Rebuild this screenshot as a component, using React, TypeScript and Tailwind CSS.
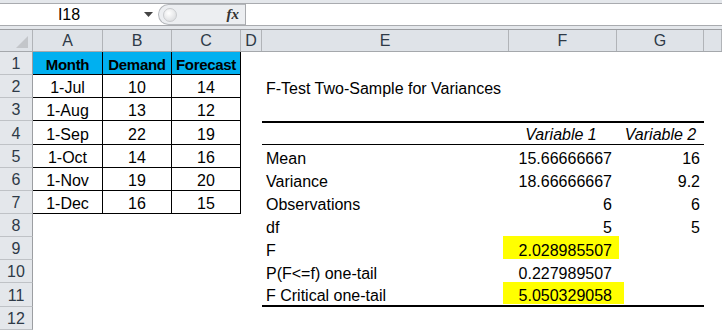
import React from 'react'

const colWidths = [
  'w-[33px]',
  'w-[70px]',
  'w-[69px]',
  'w-[69px]',
  'w-[21px]',
  'w-[247px]',
  'w-[108px]',
  'w-[87px]',
  'flex-1',
]

const colNames = ['', 'A', 'B', 'C', 'D', 'E', 'F', 'G', '']

const rowHeights = [
  'h-[23px]',
  'h-[23px]',
  'h-[23px]',
  'h-[24px]',
  'h-[23px]',
  'h-[23px]',
  'h-[23px]',
  'h-[23px]',
  'h-[23px]',
  'h-[23px]',
  'h-[24px]',
  'h-[23px]',
]

type Row = {
  a?: string
  b?: string
  c?: string
  e?: string
  f?: string
  g?: string
}

const rows: Row[] = [
  { a: 'Month', b: 'Demand', c: 'Forecast' },
  { a: '1-Jul', b: '10', c: '14', e: 'F-Test Two-Sample for Variances' },
  { a: '1-Aug', b: '13', c: '12' },
  { a: '1-Sep', b: '22', c: '19', f: 'Variable 1', g: 'Variable 2' },
  { a: '1-Oct', b: '14', c: '16', e: 'Mean', f: '15.66666667', g: '16' },
  { a: '1-Nov', b: '19', c: '20', e: 'Variance', f: '18.66666667', g: '9.2' },
  { a: '1-Dec', b: '16', c: '15', e: 'Observations', f: '6', g: '6' },
  { e: 'df', f: '5', g: '5' },
  { e: 'F', f: '2.028985507' },
  { e: 'P(F<=f) one-tail', f: '0.227989507' },
  { e: 'F Critical one-tail', f: '5.050329058' },
  {},
]

function FormulaBar() {
  return (
    <div className="flex h-[30px] flex-col">
      <div className="h-[4px] border-b border-[#a9abaf] bg-[#e4e7eb]" />
      <div className="flex h-[21px] bg-white">
        <div className="relative flex w-[158px] items-center justify-center pr-[20px]">
          <span className="text-[16px] leading-none text-black">I18</span>
          <svg
            className="absolute right-[5px] top-[8px]"
            width="9"
            height="5"
            viewBox="0 0 9 5"
          >
            <path d="M0 0 L9 0 L4.5 5 Z" fill="#444" />
          </svg>
        </div>
        <div className="flex w-[87px] items-center justify-between rounded-l-full border border-r-0 border-[#b4b7bb] bg-[#eceef1] pl-[4px] pr-[6px]">
          <span className="h-[14px] w-[14px] rounded-full border border-[#c9cbce] bg-[radial-gradient(circle_at_40%_35%,#ffffff,#d4d6d9)]" />
          <span className="font-['Liberation_Serif',serif] text-[15px] font-bold italic leading-none text-[#333]">
            fx
          </span>
        </div>
        <div className="flex-1 border-l border-[#a9abaf]" />
      </div>
      <div className="h-[5px] border-y border-b-[#9c9ea2] border-t-[#a9abaf] bg-[#e4e7eb]" />
    </div>
  )
}

function HeaderRow() {
  return (
    <div className="flex h-[22px] border-b border-[#a5a8ac] bg-[#dfe3e8]">
      {colNames.map((name, i) => (
        <div
          key={i}
          className={`${colWidths[i]} relative flex items-center justify-center border-r border-[#b1b4b8] text-[16px] leading-none text-[#2e3a47]`}
        >
          {i === 0 ? (
            <svg
              className="absolute bottom-[3px] right-[4px]"
              width="12"
              height="12"
              viewBox="0 0 12 12"
            >
              <path d="M12 0 L12 12 L0 12 Z" fill="#c3c6ca" />
            </svg>
          ) : (
            name
          )}
        </div>
      ))}
    </div>
  )
}

function Highlight({ text, wide }: { text: string; wide?: boolean }) {
  return (
    <>
      <span
        className={`absolute top-[-1px] bottom-[1px] left-[-6px] bg-[#ffff00] ${
          wide ? 'right-[-7px]' : 'right-[-2px]'
        }`}
      />
      <span className="relative">{text}</span>
    </>
  )
}

export default function App() {
  return (
    <div className="h-[331px] w-[722px] overflow-hidden bg-white font-['Liberation_Sans',Arial,sans-serif] text-black">
      <FormulaBar />
      <HeaderRow />

      {rows.map((row, r) => {
        const n = r + 1
        const inTable = n <= 7
        const isHead = n === 1
        const statTop = n === 4
        const statBottom = n === 11
        const tableCell = `flex items-end justify-center pb-[1px] border-r border-b border-black ${
          isHead ? 'bg-[#00b0f0] font-bold text-[15px] tracking-[-0.3px]' : ''
        }`
        const statBorder = statTop
          ? 'border-t-2 border-b border-black'
          : statBottom
            ? 'border-b-2 border-black'
            : ''

        return (
          <div
            key={n}
            className={`flex ${rowHeights[r]} text-[16px] leading-[16px]`}
          >
            <div className="flex w-[33px] items-end justify-center border-r border-b border-r-[#9c9ea2] border-b-[#bfc2c6] bg-[#e4e7eb] pb-[2px] text-[#2e3a47]">
              {n}
            </div>

            {inTable ? (
              <>
                <div className={`${colWidths[1]} ${tableCell}`}>{row.a}</div>
                <div className={`${colWidths[2]} ${tableCell}`}>{row.b}</div>
                <div className={`${colWidths[3]} ${tableCell}`}>{row.c}</div>
              </>
            ) : (
              <div className="w-[208px]" />
            )}

            <div className={colWidths[4]} />

            <div
              className={`${colWidths[5]} flex items-end pb-[1px] pl-[4px] ${statBorder}`}
            >
              {row.e}
            </div>
            <div
              className={`${colWidths[6]} relative flex items-end pb-[1px] ${
                statTop ? 'justify-center pr-[4px] italic' : 'justify-end pr-[5px]'
              } ${statBorder}`}
            >
              {n === 9 ? (
                <Highlight text={row.f ?? ''} />
              ) : n === 11 ? (
                <Highlight text={row.f ?? ''} wide />
              ) : (
                row.f
              )}
            </div>
            <div
              className={`${colWidths[7]} flex items-end pb-[1px] ${
                statTop ? 'justify-center italic' : 'justify-end pr-[4px]'
              } ${statBorder}`}
            >
              {row.g}
            </div>
            <div className="flex-1" />
          </div>
        )
      })}
    </div>
  )
}
